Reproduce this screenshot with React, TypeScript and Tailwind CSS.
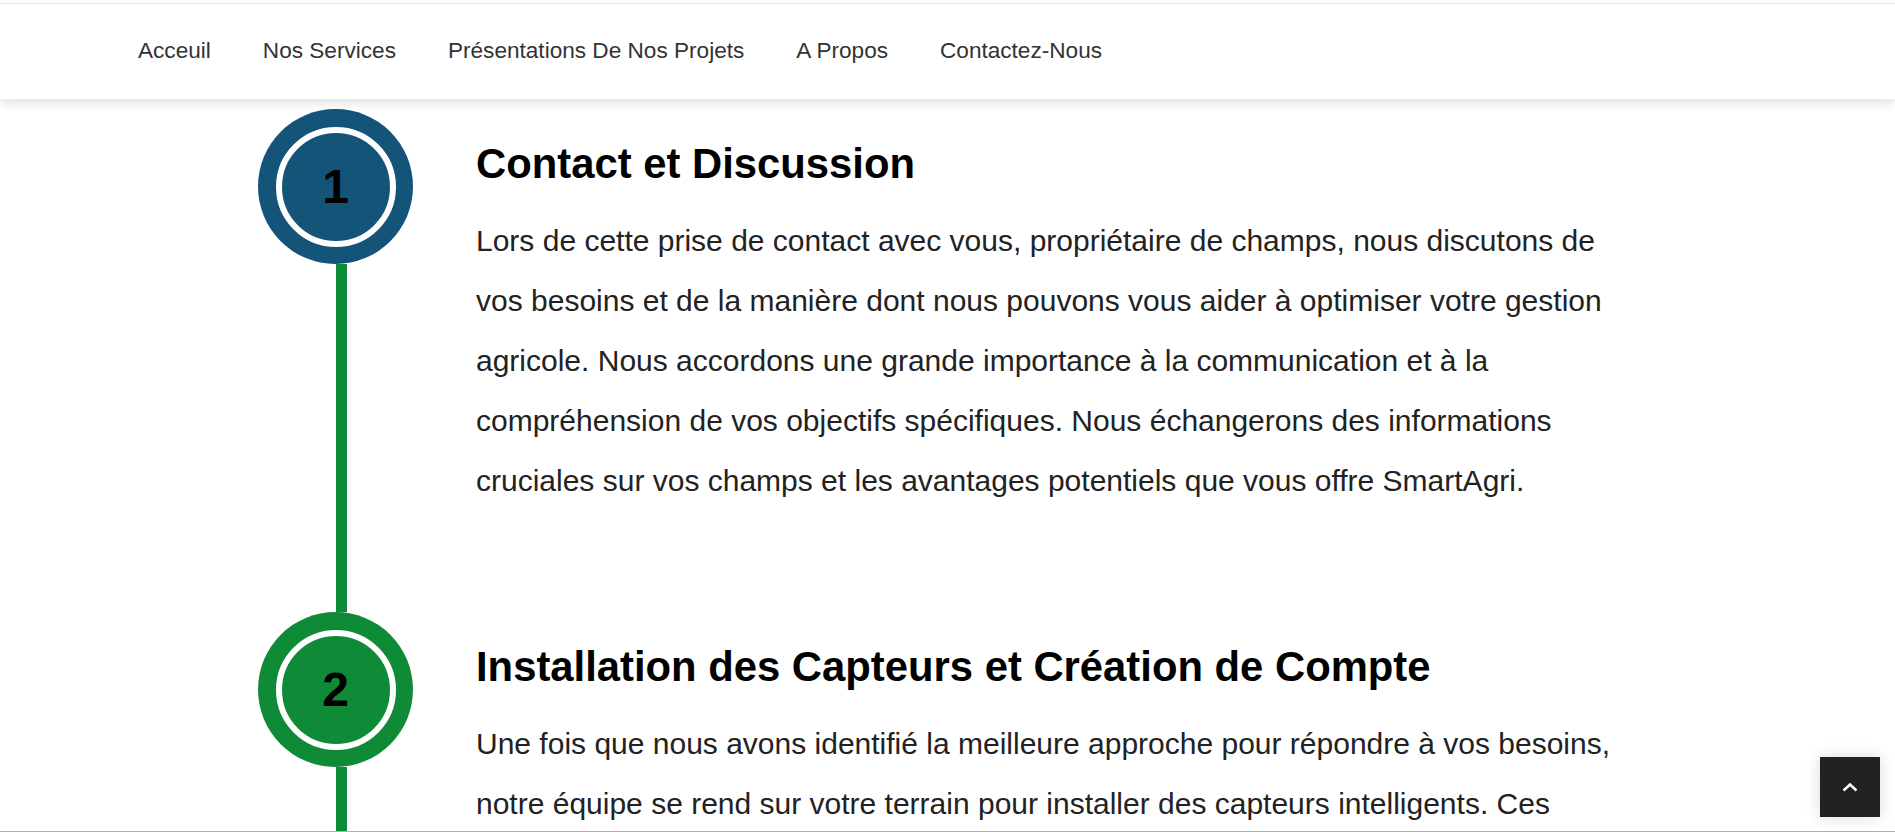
import { ReactNode } from 'react';

const NAV_LINKS = ['Acceuil', 'Nos Services', 'Présentations De Nos Projets', 'A Propos', 'Contactez-Nous'];

type Step = {
  num: number;
  title: string;
  text: string;
  circle: string;
};

const STEPS: Step[] = [
  {
    num: 1,
    title: 'Contact et Discussion',
    text:
      'Lors de cette prise de contact avec vous, propriétaire de champs, nous discutons de vos besoins et de la manière dont nous pouvons vous aider à optimiser votre gestion agricole. Nous accordons une grande importance à la communication et à la compréhension de vos objectifs spécifiques. Nous échangerons des informations cruciales sur vos champs et les avantages potentiels que vous offre SmartAgri.',
    circle: 'bg-[#145479]',
  },
  {
    num: 2,
    title: 'Installation des Capteurs et Création de Compte',
    text:
      'Une fois que nous avons identifié la meilleure approche pour répondre à vos besoins, notre équipe se rend sur votre terrain pour installer des capteurs intelligents. Ces capteurs mesurent en temps réel l’humidité du sol, la température et d’autres paramètres essentiels. Nous créons ensuite votre compte afin que vous puissiez suivre vos données.',
    circle: 'bg-[#0f8a36]',
  },
];

function StepCircle({ num, color }: { num: number; color: string }) {
  return (
    <div className={`w-[155px] h-[155px] rounded-full ${color} flex items-center justify-center shrink-0`}>
      <div className="w-[120px] h-[120px] rounded-full border-[6px] border-white flex items-center justify-center">
        <span className="text-[48px] font-bold text-black leading-none">{num}</span>
      </div>
    </div>
  );
}

function StepRow({ step, children }: { step: Step; children?: ReactNode }) {
  return (
    <div className="flex gap-[63px]">
      <div className="w-[155px] shrink-0 flex flex-col">
        <StepCircle num={step.num} color={step.circle} />
        <div className="ml-[78px] w-[11px] flex-1 bg-[#0f8a36]" />
      </div>
      <div className="flex-1 pt-[30px] pb-[101px]">
        <h2 className="text-[41.8px] font-bold leading-[1.2] text-black mb-[22px]">{step.title}</h2>
        <p className="text-[30px] leading-[60px] text-[#222]">{step.text}</p>
        {children}
      </div>
    </div>
  );
}

export default function App() {
  return (
    <div className="h-screen overflow-hidden bg-white font-['Liberation_Sans',Arial,sans-serif]">
      <header className="relative z-10 bg-white shadow-[0_4px_10px_rgba(0,0,0,0.12)]">
        <div className="h-[3px]" />
        <nav className="h-[96px] pb-[2px] border-t border-[#e2e2e2] flex items-center gap-[52px] pl-[138px]">
          {NAV_LINKS.map((link) => (
            <a key={link} href="#" className="text-[22.6px] text-[#333]">
              {link}
            </a>
          ))}
        </nav>
      </header>

      <main className="pt-[10px]">
        <div className="w-[1379px] mx-auto">
          {STEPS.map((step) => (
            <StepRow key={step.num} step={step} />
          ))}
        </div>
      </main>

      <button className="fixed right-[15px] bottom-[15px] w-[60px] h-[60px] bg-[#222] flex items-center justify-center shadow-[0_0_15px_rgba(0,0,0,0.15)]">
        <svg width="16" height="10" viewBox="0 0 16 10" fill="none">
          <polyline points="1.5,8.5 8,2.5 14.5,8.5" stroke="white" strokeWidth="2.4" />
        </svg>
      </button>

      <div className="fixed left-0 right-0 bottom-0 h-px bg-[#b0b0b0]" />
    </div>
  );
}
